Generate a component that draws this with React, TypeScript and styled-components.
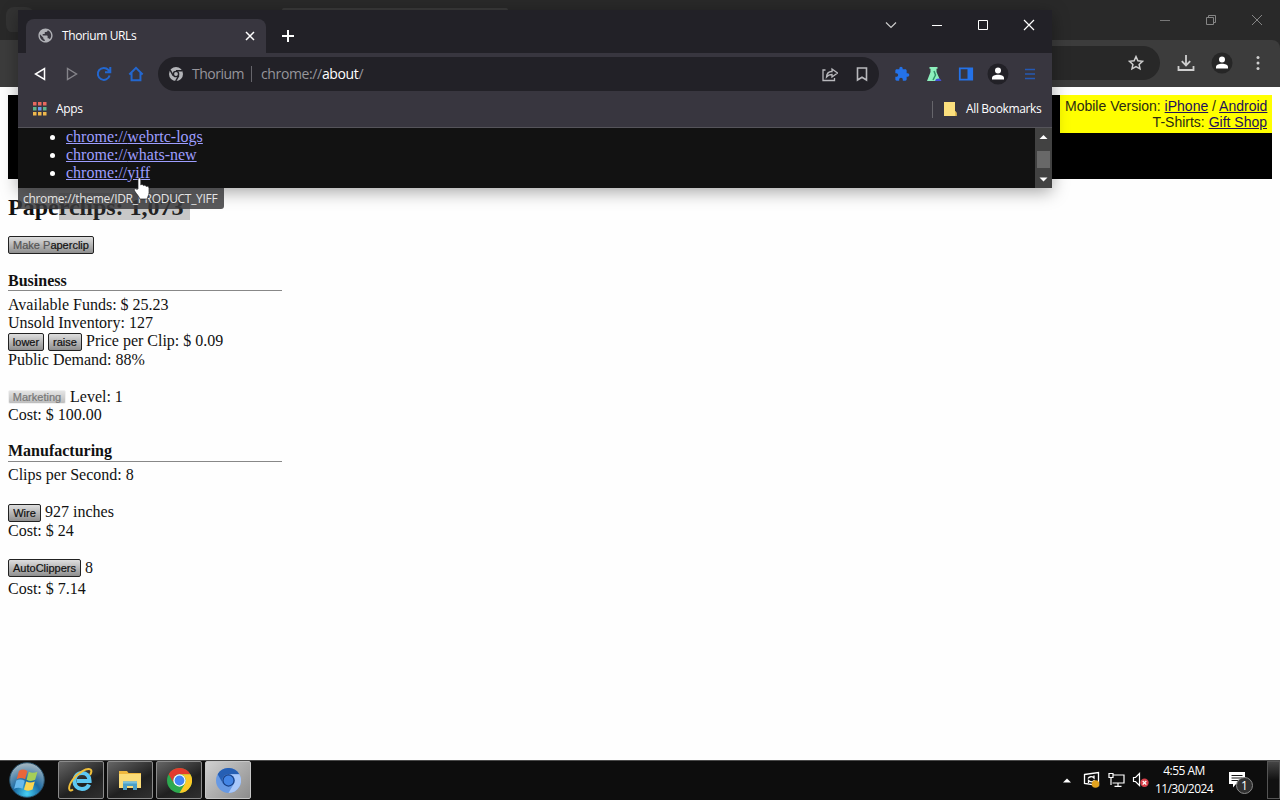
import React from "react";
import styled, { createGlobalStyle, css } from "styled-components";
import { MdExtension, MdPublic } from "react-icons/md";

const ui = `"Open Sans", "Noto Sans", sans-serif`;
const serif = `"Liberation Serif", serif`;
const sans = `"Liberation Sans", sans-serif`;

type Stat = {
  h: number;
  buttons?: { label: string; w: number; disabled?: boolean; top?: number }[];
  text?: string;
};

const businessStats: Stat[] = [
  { h: 18, text: "Available Funds: $ 25.23" },
  { h: 18, text: "Unsold Inventory: 127" },
  {
    h: 19,
    buttons: [
      { label: "lower", w: 36 },
      { label: "raise", w: 34 },
    ],
    text: "Price per Clip: $ 0.09",
  },
  { h: 18, text: "Public Demand: 88%" },
  { h: 19 },
  {
    h: 18,
    buttons: [{ label: "Marketing", w: 58, disabled: true, top: 2 }],
    text: "Level: 1",
  },
  { h: 18, text: "Cost: $ 100.00" },
];

const manufacturingStats: Stat[] = [
  { h: 18, text: "Clips per Second: 8" },
  { h: 19 },
  { h: 19, buttons: [{ label: "Wire", w: 33 }], text: "927 inches" },
  { h: 18, text: "Cost: $ 24" },
  { h: 19 },
  { h: 21, buttons: [{ label: "AutoClippers", w: 73, top: 0 }], text: "8" },
  { h: 18, text: "Cost: $ 7.14" },
];

const StatRows: React.FC<{ rows: Stat[] }> = ({ rows }) => (
  <>
    {rows.map((row, i) => (
      <StatRow key={i} $h={row.h}>
        {row.buttons?.map((b) => (
          <GameButton
            key={b.label}
            $w={b.w}
            $top={b.top ?? 1}
            disabled={b.disabled}
          >
            {b.label}
          </GameButton>
        ))}
        {row.text && <span>{row.text}</span>}
      </StatRow>
    ))}
  </>
);

const ChromeLogo: React.FC<{
  size: number;
  colors: [string, string, string];
  ring: string;
  dot: string;
}> = ({ size, colors, ring, dot }) => (
  <svg width={size} height={size} viewBox="0 0 24 24">
    <circle cx="12" cy="12" r="12" fill={colors[1]} />
    <path d="M1.6 6A12 12 0 0 1 22.4 6H12A6 6 0 0 0 6.8 15Z" fill={colors[0]} />
    <path d="M22.4 6A12 12 0 0 1 12 24L17.2 15A6 6 0 0 0 12 6Z" fill={colors[2]} />
    <circle cx="12" cy="12" r="5.9" fill={ring} />
    <circle cx="12" cy="12" r="4.7" fill={dot} />
  </svg>
);

const PersonIcon: React.FC<{ bg: string }> = ({ bg }) => (
  <svg width="22" height="22" viewBox="0 0 22 22">
    <circle cx="11" cy="11" r="10.5" fill={bg} />
    <circle cx="11" cy="7.6" r="3" fill="#fff" />
    <path d="M5 16.6V15c0-2.2 3-3.3 6-3.3s6 1.1 6 3.3v1.6z" fill="#fff" />
  </svg>
);

const BackBrowser = () => (
  <>
    <BackTabStrip>
      <TabSearch />
      <BackTabEdge />
      <svg width="12" height="12" viewBox="0 0 12 12" stroke="#777" fill="none">
        <path d="M1 6.5h10" />
      </svg>
      <svg width="12" height="12" viewBox="0 0 12 12" stroke="#858585" fill="none">
        <path d="M1.5 3.5h7v7h-7zM3.5 3.5v-2h7v7h-2" />
      </svg>
      <svg width="12" height="12" viewBox="0 0 12 12" stroke="#858585" fill="none">
        <path d="M1 1l10 10M11 1L1 11" />
      </svg>
    </BackTabStrip>
    <BackToolbar>
      <BackOmnibox>
        <svg width="16" height="16" viewBox="0 0 16 16" stroke="#cfcfcf" strokeWidth="1.5" fill="none">
          <path d="M8 1.6l1.9 4.2 4.6.5-3.4 3.1.9 4.5L8 11.6l-4 2.3.9-4.5L1.5 6.3l4.6-.5z" />
        </svg>
      </BackOmnibox>
      <svg width="18" height="18" viewBox="0 0 18 18" stroke="#cfcfcf" strokeWidth="1.8" fill="none">
        <path d="M9 1v10M4.8 7.2L9 11.4l4.2-4.2M1.5 12v4h15v-4" />
      </svg>
      <PersonIcon bg="#262626" />
      <svg width="6" height="16" viewBox="0 0 6 16" fill="#cfcfcf">
        <circle cx="3" cy="2.5" r="1.5" />
        <circle cx="3" cy="8" r="1.5" />
        <circle cx="3" cy="13.5" r="1.5" />
      </svg>
    </BackToolbar>
  </>
);

const ThoriumWindow = () => (
  <FrontWindow>
    <TabStrip>
      <Tab>
        <MdPublic size={17} color="#b0b1b6" />
        <TabTitle>Thorium URLs</TabTitle>
        <svg width="10" height="10" viewBox="0 0 10 10" stroke="#fff" strokeWidth="1.5">
          <path d="M1 1l8 8M9 1L1 9" />
        </svg>
      </Tab>
      <NewTab>
        <svg width="12" height="12" viewBox="0 0 12 12" stroke="#fff" strokeWidth="2">
          <path d="M6 0v12M0 6h12" />
        </svg>
      </NewTab>
      <Caption>
        <svg width="12" height="12" viewBox="0 0 12 12" stroke="#ccc" strokeWidth="1.2" fill="none">
          <path d="M1 3.5l5 5 5-5" />
        </svg>
        <svg width="12" height="12" viewBox="0 0 12 12" stroke="#fff" fill="none">
          <path d="M1 6.5h10" />
        </svg>
        <svg width="12" height="12" viewBox="0 0 12 12" stroke="#fff" fill="none">
          <path d="M1.5 1.5h9v9h-9z" />
        </svg>
        <svg width="12" height="12" viewBox="0 0 12 12" stroke="#fff" strokeWidth="1.2" fill="none">
          <path d="M1 1l10 10M11 1L1 11" />
        </svg>
      </Caption>
    </TabStrip>
    <Toolbar>
      <NavButtons>
        <svg width="16" height="16" viewBox="0 0 16 16" stroke="#fff" strokeWidth="1.5" fill="none">
          <path d="M12.5 2.5v11L3.5 8z" />
        </svg>
        <svg width="16" height="16" viewBox="0 0 16 16" stroke="#85848a" strokeWidth="1.4" fill="none">
          <path d="M3.5 2.5v11L12.5 8z" />
        </svg>
        <svg width="16" height="16" viewBox="0 0 16 16" stroke="#2367cf" strokeWidth="2" fill="none">
          <path d="M13.6 9.5A6 6 0 1 1 12.4 4L14 5.6M14.3 1v5.3H9" />
        </svg>
        <svg width="16" height="16" viewBox="0 0 18 18" stroke="#2367cf" strokeWidth="2.2" fill="none">
          <path d="M1.5 9.5L9 2l7.500 7.500M4 8v8h10V8" />
        </svg>
      </NavButtons>
      <Omnibox>
        <svg width="14" height="14" viewBox="0 0 24 24">
          <circle cx="12" cy="12" r="12" fill="#b3b4b8" />
          <circle cx="12" cy="12" r="4.5" fill="none" stroke="#232228" strokeWidth="2.5" />
          <path d="M12 6.5h11M7.2 14.7L2 5.5M16.8 14.7L11.5 24" stroke="#232228" strokeWidth="2.5" />
        </svg>
        <SiteName>Thorium</SiteName>
        <OmniDivider />
        <Url>
          chrome://<b>about</b>/
        </Url>
        <OmniIcons>
          <svg width="16" height="16" viewBox="0 0 16 16" stroke="#b9b9bd" strokeWidth="1.3" fill="none">
            <path d="M3.5 4H1v10.5h11.5V12M4.5 11c.2-3.500 2-5.500 5.500-5.500V3l5.500 4L10 11V8.500C7.500 8.500 6 9 4.500 11z" />
          </svg>
          <svg width="16" height="16" viewBox="0 0 16 16" stroke="#b9b9bd" strokeWidth="1.6" fill="none">
            <path d="M3.5 2h9v12L8 11.3 3.5 14z" />
          </svg>
        </OmniIcons>
      </Omnibox>
      <ToolIcons>
        <MdExtension size={16} color="#2472e8" />
        <svg width="16" height="16" viewBox="0 0 16 16">
          <path d="M3.5 1h8v1.8h-1V6l4 9H1l3.500-9V2.800h-1z" fill="#8df0bd" />
          <path d="M8 5l1.500 4-2.500 5" stroke="#31936a" strokeWidth="1.5" fill="none" />
          <path d="M9 15a3.4 3.4 0 0 1 6.500 0z" fill="#4450d8" />
        </svg>
        <svg width="16" height="16" viewBox="0 0 16 16">
          <path d="M1.8 2.3h12.4v11.4H1.8z" fill="none" stroke="#2472e8" strokeWidth="1.8" />
          <path d="M9.5 2h5v12h-5z" fill="#2472e8" />
        </svg>
        <PersonIcon bg="#222127" />
        <svg width="16" height="16" viewBox="0 0 16 16" stroke="#2459b4" strokeWidth="1.6">
          <path d="M3 3.5h10M3 8h10M3 12.5h10" />
        </svg>
      </ToolIcons>
    </Toolbar>
    <BookmarksBar>
      <svg width="14" height="14" viewBox="0 0 14 14">
        {["#e8695f", "#5fb58b", "#efb84c"].map((c, r) =>
          [0, 1, 2].map((n) => (
            <rect
              key={`${r}${n}`}
              x={n * 5}
              y={r * 5}
              width="3.5"
              height="3.5"
              fill={r === 1 && n === 1 ? "#6a9be8" : c}
            />
          ))
        )}
      </svg>
      <BookmarkText $w={28}>Apps</BookmarkText>
      <BookmarkDivider />
      <svg width="13" height="14" viewBox="0 0 13 14">
        <path d="M0 0h11v9l1.500 1.500V14H0z" fill="#fbdf7d" />
        <path d="M11 9l1.500 2v3H11z" fill="#e6bd4f" />
      </svg>
      <BookmarkText $w={76}>All Bookmarks</BookmarkText>
    </BookmarksBar>
    <PageArea>
      <UrlList>
        {["webrtc-logs", "whats-new", "yiff"].map((name) => (
          <li key={name}>
            <UrlLink>chrome://{name}</UrlLink>
          </li>
        ))}
      </UrlList>
      <Scrollbar>
        <svg width="17" height="60" viewBox="0 0 17 60">
          <path d="M4.5 11l4-4 4 4zM4.5 49.5l4 4 4-4z" fill="#fff" />
          <path d="M2 23h13v17H2z" fill="#686868" />
        </svg>
      </Scrollbar>
    </PageArea>
  </FrontWindow>
);

const Taskbar = () => (
  <TaskbarRoot>
    <StartButton>
      <svg width="36" height="36" viewBox="0 0 36 36">
        <defs>
          <radialGradient id="orb" cx="50%" cy="90%" r="85%">
            <stop offset="0" stopColor="#45d1f5" />
            <stop offset="0.45" stopColor="#1b6aa3" />
            <stop offset="1" stopColor="#9db2be" />
          </radialGradient>
        </defs>
        <circle cx="18" cy="18" r="17.3" fill="url(#orb)" stroke="#27516b" />
        <g transform="translate(-2.5 -3.5) scale(1.18)">
          <path d="M10.5 10.5c2.5-1.6 4.7-1.3 7.2 0l-1.9 7c-2.5-1.3-4.7-1.4-7.2 0z" fill="#e9663a" />
          <path d="M18.9 11.2c2.4 1.3 4.7 1.2 7.3 0l-1.9 6.900c-2.600 1.300-4.900 1.200-7.300-.1z" fill="#a5cf58" />
          <path d="M8.3 18.7c2.5-1.4 4.7-1.2 7.2.1l-1.9 6.900c-2.500-1.300-4.700-1.400-7.200 0z" fill="#68b9ec" />
          <path d="M16.7 19.4c2.4 1.3 4.7 1.2 7.3 0l-1.9 6.900c-2.600 1.300-4.900 1.200-7.300-.1z" fill="#fbd550" />
        </g>
      </svg>
    </StartButton>
    <TaskButton>
      <svg width="26" height="26" viewBox="0 0 26 26" fill="none">
        <path d="M21 17.5c-1.3 3-4 4.500-7 4.500-4.500 0-7.500-3.500-7.500-8s3-8 7.500-8 7.500 3.200 7.500 8H9" stroke="#5dc8f3" strokeWidth="4.2" />
        <path d="M5 22.5C.5 26-.5 20 4.500 13S19 .3 22.500 2.500c1.400.9 1 3-.5 5.500" stroke="#efbf3b" strokeWidth="2" />
      </svg>
    </TaskButton>
    <TaskButton>
      <svg width="24" height="22" viewBox="0 0 24 22">
        <path d="M1 2h8l1.500 2H23v15H1z" fill="#efb83f" />
        <path d="M1 5h22v14H1z" fill="#fbdc78" />
        <path d="M5 21v-8.500h14V21h-4v-4H9v4z" fill="#4b9fc6" />
        <path d="M5 12.500h14v2H5z" fill="#79c1dd" />
      </svg>
    </TaskButton>
    <TaskButton>
      <ChromeLogo size={25} colors={["#e33b2e", "#2da94f", "#fdc928"]} ring="#fff" dot="#4285f4" />
    </TaskButton>
    <TaskButton $active>
      <ChromeLogo size={25} colors={["#265fb4", "#6799e4", "#a9c8fa"]} ring="#173f86" dot="#4385e6" />
    </TaskButton>
    <Tray>
      <svg width="8" height="5" viewBox="0 0 8 5">
        <path d="M0 4.500L4 .5l4 4z" fill="#fff" />
      </svg>
      <svg width="18" height="18" viewBox="0 0 18 18" fill="none" stroke="#fff" strokeWidth="1.3">
        <path d="M1.500 3.500l14-2v13l-14-2z" />
        <path d="M5 7.500c1-2 4-2.500 6-.5V4.500M11.500 9c-1 2-4 2.500-6 .5V12" />
        <circle cx="12.5" cy="13" r="3.8" fill="#e2a31f" stroke="none" />
      </svg>
      <svg width="17" height="16" viewBox="0 0 17 16" fill="none" stroke="#fff" strokeWidth="1.2">
        <path d="M5 3h11v8H4.500M1 1.500h4v4H1zM3 5.500V13M10 11v3M6.500 14.400h7" />
      </svg>
      <svg width="17" height="16" viewBox="0 0 17 16" fill="none">
        <path d="M1.500 5.500h2l4-4v12l-4-4h-2z" stroke="#fff" strokeWidth="1.2" />
        <circle cx="12.5" cy="10.8" r="4.2" fill="#d8404a" />
        <path d="M10.700 9l3.600 3.600M14.300 9l-3.600 3.600" stroke="#fff" strokeWidth="1.3" />
      </svg>
    </Tray>
    <Clock>
      <span>4:55 AM</span>
      <span>11/30/2024</span>
    </Clock>
    <Notification>
      <svg width="18" height="18" viewBox="0 0 18 18">
        <path d="M1 1h16v12H8l-3 3.500V13H1z" fill="#fff" />
        <path d="M3.500 4.500h11M3.500 7h11M3.500 9.500h7" stroke="#151515" />
      </svg>
      <Badge>1</Badge>
    </Notification>
    <ShowDesktop />
  </TaskbarRoot>
);

const App: React.FC = () => (
  <Desktop>
    <GlobalStyle />
    <BackBrowser />
    <GamePage>
      <Banner>
        <MobileBox>
          <div>
            Mobile Version: <a>iPhone</a> / <a>Android</a>
          </div>
          <div>
            T-Shirts: <a>Gift Shop</a>
          </div>
        </MobileBox>
      </Banner>
      <Heading>
        Pape<Selected>rclips: 1,073</Selected>
      </Heading>
      <ClipRow>
        <GameButton $w={86} $top={0}>
          <i>Make P</i>aperclip
        </GameButton>
      </ClipRow>
      <SectionTitle $top={19} $h={18}>
        Business
      </SectionTitle>
      <StatRows rows={businessStats} />
      <SectionTitle $top={19} $h={19}>
        Manufacturing
      </SectionTitle>
      <StatRows rows={manufacturingStats} />
    </GamePage>
    <Taskbar />
    <ThoriumWindow />
    <StatusBubble>chrome://theme/IDR_PRODUCT_YIFF</StatusBubble>
    <Cursor width="18" height="23" viewBox="0 0 18 23">
      <path
        d="M5 12V2.500c0-2 2.800-2 2.800 0V8c.8-.8 2.300-.6 2.700.6.900-.7 2.200-.4 2.600.8 1.200-.6 2.900 0 2.900 1.700v4.400c0 3-1.500 4-1.700 6.500H6.800c-.5-2.500-3-4.500-5.300-8.200-1-1.700 1-2.800 2.200-1.500z"
        fill="#fff"
        stroke="#222"
        strokeWidth="0.7"
      />
    </Cursor>
  </Desktop>
);

const GlobalStyle = createGlobalStyle`
  * {
    box-sizing: border-box;
  }
  body {
    margin: 0;
    overflow: hidden;
  }
  svg {
    display: block;
    flex: none;
  }
`;

const Desktop = styled.div`
  position: relative;
  display: flex;
  flex-direction: column;
  width: 1280px;
  height: 800px;
  overflow: hidden;
  background: #fefefe;
`;

const BackTabStrip = styled.div`
  display: flex;
  align-items: center;
  gap: 34px;
  height: 40px;
  padding: 0 17px 0 6px;
  background: #292929;
`;

const TabSearch = styled.div`
  width: 28px;
  height: 26px;
  border-radius: 8px;
  background: #333;
`;

const BackTabEdge = styled.div`
  align-self: flex-start;
  width: 226px;
  height: 2px;
  margin: 8px auto 0 214px;
  border-radius: 2px 2px 0 0;
  background: #3a3a3a;
`;

const BackToolbar = styled.div`
  display: flex;
  align-items: center;
  justify-content: flex-end;
  height: 47px;
  padding: 0 19px 1px 0;
  background: #3c3c3c;
  border-top-right-radius: 8px;
  box-shadow: 8px -8px 0 #292929;

  & > svg:nth-of-type(1) {
    margin: 0 16px 0 17px;
  }
  & > svg:last-child {
    margin-left: 22px;
  }
`;

const BackOmnibox = styled.div`
  display: flex;
  align-items: center;
  justify-content: flex-end;
  width: 1080px;
  height: 34px;
  padding-right: 16px;
  border-radius: 17px;
  background: #282828;
`;

const GamePage = styled.main`
  flex: 1;
  display: flex;
  flex-direction: column;
  padding: 8px;
  font-family: ${serif};
  font-size: 16px;
  color: #111;
`;

const Banner = styled.div`
  display: flex;
  justify-content: flex-end;
  align-items: flex-start;
  height: 84px;
  background: #000;
`;

const MobileBox = styled.div`
  width: 212px;
  height: 38px;
  padding: 3px 5px;
  background: #ff0;
  font: 14px/16px ${sans};
  text-align: right;
  white-space: nowrap;
  color: #2b2b12;

  a {
    color: #22105a;
    text-decoration: underline;
  }
`;

const Heading = styled.h1`
  margin: 14px 0 0;
  height: 28px;
  font-size: 24px;
  line-height: 28px;
  font-weight: bold;
`;

const Selected = styled.span`
  padding: 1px 6px 0 0;
  background: #c8c8c8;
  color: #222;
`;

const ClipRow = styled.div`
  display: flex;
  height: 18px;
  margin-top: 15px;
`;

const GameButton = styled.button<{ $w: number; $top: number }>`
  width: ${(p) => p.$w}px;
  height: 18px;
  margin: ${(p) => p.$top}px 0 0;
  padding: 0;
  border: 1px solid #222;
  border-radius: 2px;
  background: linear-gradient(#dedede, #8f8f8f);
  font: 11px/16px ${sans};
  color: #111;
  white-space: nowrap;
  -webkit-text-stroke: 0.2px;

  i {
    font-style: normal;
    color: #555;
  }

  ${(p) =>
    p.disabled &&
    css`
      height: 14px;
      border-color: #f0f0f0;
      background: linear-gradient(#e4e4e4, #bdbdbd);
      color: #777;
      line-height: 12px;
    `}
`;

const SectionTitle = styled.h2<{ $top: number; $h: number }>`
  height: ${(p) => p.$h}px;
  margin: ${(p) => p.$top}px 0 ${(p) => 23 - p.$h}px;
  width: 274px;
  border-bottom: 1px solid #888;
  font-size: 16px;
  line-height: 16px;
`;

const StatRow = styled.div<{ $h: number }>`
  display: flex;
  align-items: flex-start;
  gap: 4px;
  height: ${(p) => p.$h}px;
  line-height: 18px;
  white-space: nowrap;
`;

const FrontWindow = styled.section`
  position: absolute;
  left: 18px;
  top: 10px;
  display: flex;
  flex-direction: column;
  width: 1034px;
  height: 178px;
  background: #38363f;
  box-shadow: 0 4px 16px rgba(0, 0, 0, 0.35);
  font-family: ${ui};
  color: #fff;
`;

const TabStrip = styled.div`
  display: flex;
  align-items: flex-start;
  height: 43px;
  background: #222127;
`;

const Tab = styled.div`
  display: flex;
  align-items: center;
  width: 240px;
  height: 34px;
  margin: 9px 0 0 8px;
  padding: 0 11px 1px 11px;
  border-radius: 8px 8px 0 0;
  background: #38363f;
`;

const TabTitle = styled.span`
  flex: 1;
  margin-left: 8px;
  font-size: 12px;
  letter-spacing: -0.38px;
`;

const NewTab = styled.div`
  margin: 20px 0 0 16px;
`;

const Caption = styled.div`
  display: flex;
  gap: 34px;
  margin: 9px 17px 0 auto;
`;

const Toolbar = styled.div`
  display: flex;
  align-items: center;
  height: 42px;
`;

const NavButtons = styled.div`
  display: flex;
  align-items: center;
  gap: 16px;
  width: 140px;
  padding-left: 14px;
`;

const Omnibox = styled.div`
  display: flex;
  align-items: center;
  width: 721px;
  height: 34px;
  padding: 0 9px 0 11px;
  border-radius: 17px;
  background: #222127;
  font-size: 14px;
  line-height: 18px;
`;

const SiteName = styled.span`
  width: 52px;
  margin: -1px 0 0 9px;
  color: #96959b;
  letter-spacing: -0.5px;
`;

const OmniDivider = styled.div`
  width: 1px;
  height: 16px;
  margin: 0 9px 0 7px;
  background: #66656b;
`;

const Url = styled.span`
  flex: 1;
  margin-top: -1px;
  color: #96959b;
  letter-spacing: -0.37px;

  b {
    font-weight: normal;
    color: #fff;
  }
`;

const OmniIcons = styled.div`
  display: flex;
  gap: 16px;
`;

const ToolIcons = styled.div`
  display: flex;
  align-items: center;
  gap: 16px;
  padding-left: 15px;

  & > svg:nth-child(4) {
    margin: 0 -3px;
  }
`;

const BookmarksBar = styled.div`
  display: flex;
  align-items: center;
  height: 33px;
  padding: 0 10px 4px 15px;
  border-bottom: 1px solid #55545a;
`;

const BookmarkText = styled.span<{ $w: number }>`
  width: ${(p) => p.$w}px;
  margin-left: 9px;
  font-size: 12px;
  line-height: 16px;
  letter-spacing: -0.35px;
  white-space: nowrap;
`;

const BookmarkDivider = styled.div`
  width: 1px;
  height: 17px;
  margin: 0 11px 0 auto;
  background: #66656b;
`;

const PageArea = styled.div`
  flex: 1;
  display: flex;
  justify-content: space-between;
  overflow: hidden;
  background: #121212;
`;

const UrlList = styled.ul`
  margin: 0;
  padding-left: 48px;
  font: 16px/18px ${serif};
`;

const UrlLink = styled.a`
  color: #9e9eff;
  text-decoration: underline;
`;

const Scrollbar = styled.div`
  width: 17px;
  background: #424242;
`;

const StatusBubble = styled.div`
  position: absolute;
  left: 18px;
  top: 188px;
  width: 206px;
  height: 21px;
  padding-left: 5px;
  border-radius: 0 0 3px 0;
  background: rgba(56, 56, 58, 0.84);
  font: 12px/22px ${ui};
  letter-spacing: -0.3px;
  white-space: nowrap;
  color: #e4e4e4;
`;

const Cursor = styled.svg`
  position: absolute;
  left: 133px;
  top: 177px;
`;

const TaskbarRoot = styled.footer`
  display: flex;
  align-items: center;
  gap: 3px;
  height: 40px;
  padding-bottom: 1px;
  border-top: 1px solid #4a4a4a;
  background: #0d0d0d;
  font-family: ${ui};
  color: #fff;
`;

const StartButton = styled.div`
  width: 55px;
  padding-left: 9px;
`;

const TaskButton = styled.div<{ $active?: boolean }>`
  display: flex;
  align-items: center;
  justify-content: center;
  width: 46px;
  height: 38px;
  border: 1px solid ${(p) => (p.$active ? "#c6c6c6" : "#8b8b8b")};
  border-radius: 2px;
  background: ${(p) =>
    p.$active
      ? "linear-gradient(135deg, #d0d0d0, #8c8c8c)"
      : "linear-gradient(150deg, #656565, #202020 60%, #303030)"};
`;

const Tray = styled.div`
  display: flex;
  align-items: center;
  gap: 7px;
  margin: 0 -1px 0 auto;

  svg:first-child {
    margin-right: 5px;
  }
`;

const Clock = styled.div`
  display: flex;
  flex-direction: column;
  align-items: center;
  width: 66px;
  font-size: 12px;
  line-height: 18px;
  letter-spacing: -0.55px;
`;

const Notification = styled.div`
  position: relative;
  width: 44px;
  padding-left: 8px;
`;

const Badge = styled.span`
  position: absolute;
  left: 16px;
  top: 6px;
  width: 17px;
  height: 17px;
  border: 1px solid #8a8a8a;
  border-radius: 50%;
  background: #303030;
  font-size: 12px;
  line-height: 15px;
  text-align: center;
`;

const ShowDesktop = styled.div`
  width: 13px;
  height: 38px;
  border: 1px solid #555;
  background: linear-gradient(#444, #111 50%);
`;

export default App;
